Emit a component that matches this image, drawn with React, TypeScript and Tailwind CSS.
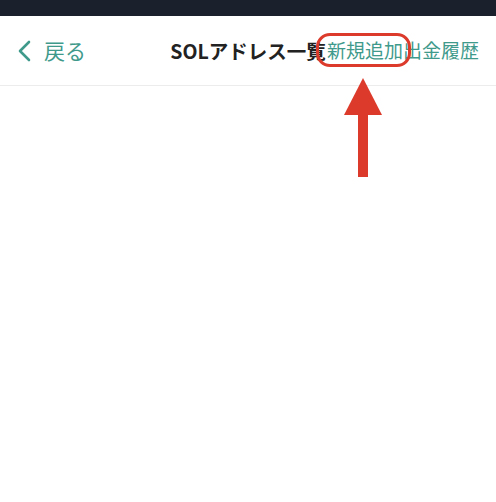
import React from 'react';

const FONT = '"Noto Sans CJK JP", "Noto Sans", Roboto, sans-serif';

function BackChevron() {
  return (
    <svg width="16" height="22" viewBox="0 0 16 22" fill="none">
      <path d="M13 2 L4 11 L13 20" stroke="#3f9a8c" strokeWidth="2.6" strokeLinecap="round" strokeLinejoin="round" />
    </svg>
  );
}

function App() {
  return (
    <div className="relative h-[502px] w-[496px] overflow-hidden bg-white" style={{ fontFamily: FONT }}>
      {/* status bar */}
      <div className="h-[16px] bg-[#1b212c]" />

      {/* header */}
      <header className="relative flex h-[70px] items-center justify-between border-b border-[#ececec] pl-[16px] pr-[17px]">
        <button className="flex items-center gap-[12px] text-[21px] text-[#3f9a8c]">
          <BackChevron />
          <span>戻る</span>
        </button>
        <h1 className="absolute left-1/2 -translate-x-1/2 text-[19.5px] font-bold text-[#222]">SOLアドレス一覧</h1>
        <div className="flex items-center text-[19px] text-[#3f9a8c]">
          <button>新規追加</button>
          <button>出金履歴</button>
        </div>
      </header>

      {/* annotation: highlight ring */}
      <div className="absolute left-[316px] top-[33px] h-[34px] w-[95px] rounded-[14px] border-[3.5px] border-[#dc3b2c]" />

      {/* annotation: arrow */}
      <svg className="absolute left-[340px] top-[76px]" width="46" height="104" viewBox="0 0 46 104">
        <polygon points="23,2 42,39 4,39" fill="#dc3b2c" />
        <rect x="18" y="38" width="10" height="63" fill="#dc3b2c" />
      </svg>
    </div>
  );
}

export default App;
